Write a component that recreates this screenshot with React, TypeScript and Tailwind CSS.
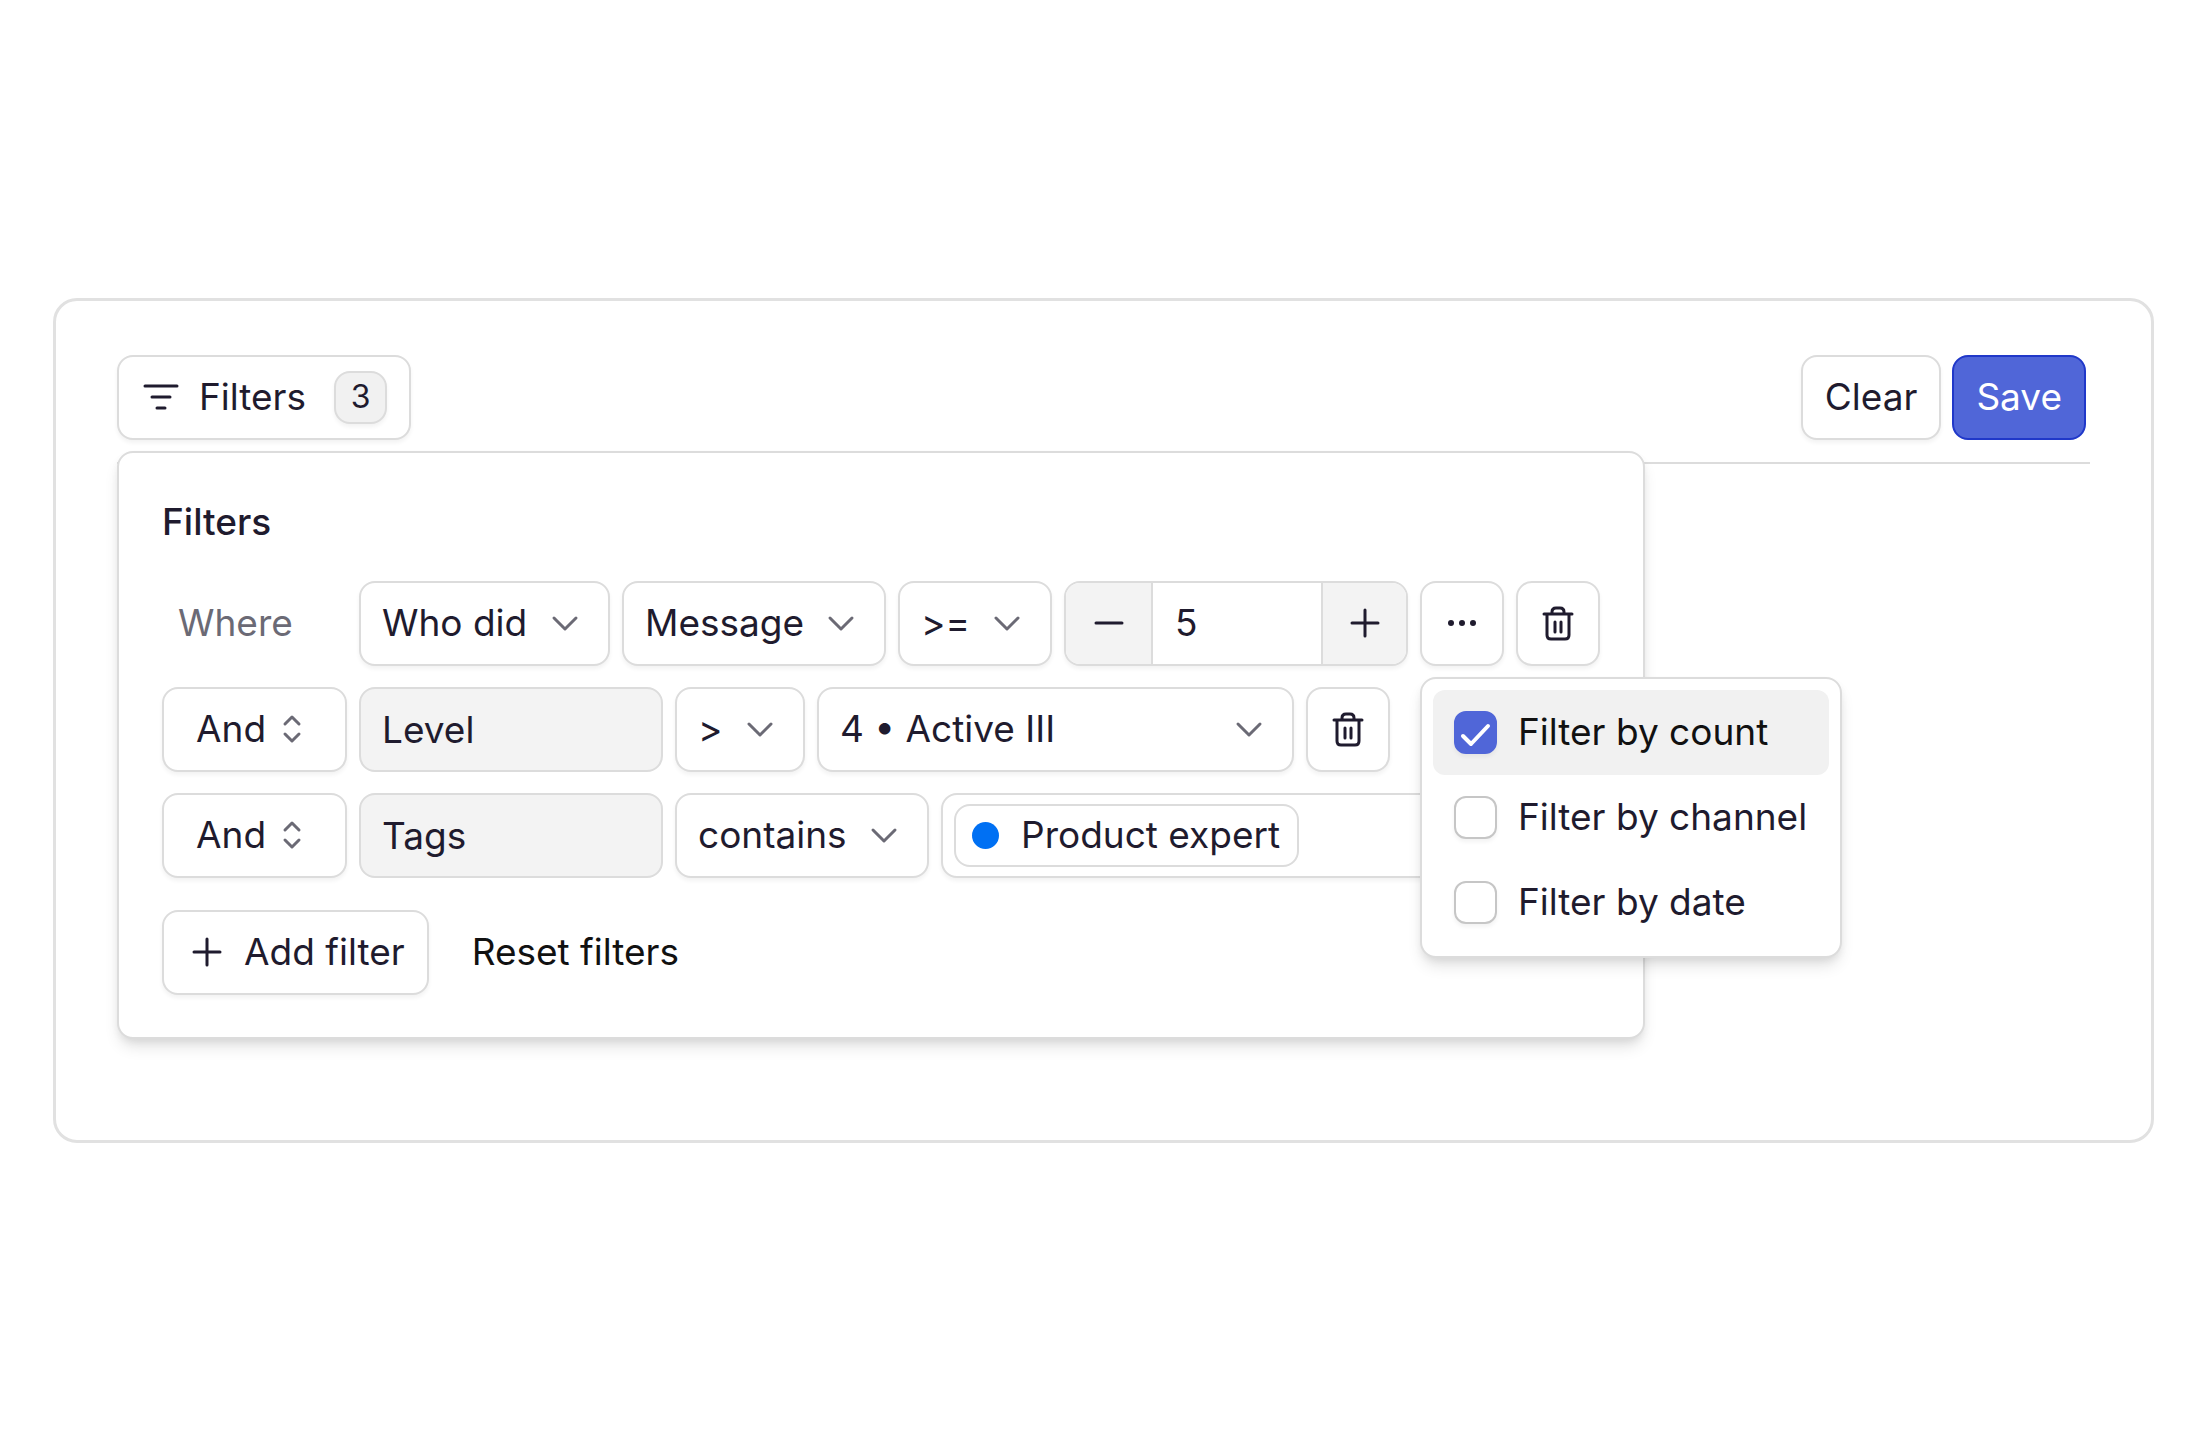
import React from "react";

const ink = "text-[#1f1b2e]";
const shell = "h-[85px] shrink-0 rounded-2xl border-2 border-[#dcdcdc] bg-white shadow-[0_3px_4px_rgba(0,0,0,0.05)]";
const filled = "h-[85px] shrink-0 rounded-2xl border-2 border-[#dcdcdc] bg-[#f3f3f3]";

function Stroke({ d, className, w, h, weight = 3 }: { d: string; className?: string; w: number; h: number; weight?: number }) {
  return (
    <svg width={w} height={h} viewBox={`0 0 ${w} ${h}`} fill="none" stroke="currentColor" strokeWidth={weight} strokeLinecap="round" strokeLinejoin="round" className={className} aria-hidden="true">
      <path d={d} />
    </svg>
  );
}

const chevron = "M3 3 14 14 25 3";
const plus = "M3 16H29M16 3V29";

function Trash() {
  return (
    <Stroke w={34} h={38} d="M3 10H31M6 10V31Q6 35 10 35H24Q28 35 28 31V10M11 10V8Q11 4 15 4H19Q23 4 23 8V10M14 18V28M20 18V28" />
  );
}

function Dropdown({ label, value, className }: { label: string; value: string; className: string }) {
  return (
    <div className={`relative shrink-0 ${className}`}>
      <select aria-label={label} className={`${shell} w-full appearance-none pl-[21px] pr-16`}>
        <option>{value}</option>
      </select>
      <Stroke w={28} h={17} d={chevron} className="pointer-events-none absolute right-[31px] top-[34px] text-[#6b6a75]" />
    </div>
  );
}

function Conjunction({ label }: { label: string }) {
  return (
    <div className="relative w-[185px] shrink-0">
      <select aria-label={label} className={`${shell} w-full appearance-none pl-8 pr-16`}>
        <option>And</option>
        <option>Or</option>
      </select>
      <Stroke w={20} h={30} d="M3 10 10 3 17 10M3 20 10 27 17 20" className="pointer-events-none absolute right-[45px] top-[27px] text-[#6b6a75]" />
    </div>
  );
}

function DeleteButton() {
  return (
    <button aria-label="Delete filter" className={`${shell} flex w-[84px] items-center justify-center`}>
      <Trash />
    </button>
  );
}

function MenuOption({ label, checked }: { label: string; checked?: boolean }) {
  return (
    <label className={checked ? "flex h-[85px] items-center gap-[21px] rounded-xl bg-[#f1f1f1] px-[21px] text-[#111111]" : "flex h-[85px] items-center gap-[21px] rounded-xl px-[21px]"}>
      <span className="relative flex size-[43px] shrink-0">
        <input type="checkbox" defaultChecked={checked} className="peer size-full appearance-none rounded-xl border-2 border-[#c6c6c6] bg-white shadow-[0_3px_4px_rgba(0,0,0,0.05)] checked:border-[#5066d8] checked:bg-[#5066d8]" />
        <Stroke w={43} h={43} weight={4} d="M9 25 17 33 34 15" className="pointer-events-none absolute inset-0 hidden text-white peer-checked:block" />
      </span>
      <span className="whitespace-nowrap">{label}</span>
    </label>
  );
}

function FilterMenu() {
  return (
    <div className="absolute left-0 top-[96px] z-10 flex w-[422px] flex-col rounded-2xl border-2 border-[#dcdcdc] bg-white p-[11px] shadow-[0_10px_16px_-3px_rgba(0,0,0,0.12),0_4px_8px_-2px_rgba(0,0,0,0.08)]">
      <MenuOption label="Filter by count" checked />
      <MenuOption label="Filter by channel" />
      <MenuOption label="Filter by date" />
    </div>
  );
}

export default function App() {
  return (
    <main className={`flex min-h-screen items-center bg-white px-[53px] font-['Inter',sans-serif] text-[37px] leading-[52px] ${ink}`}>
      <section className="w-full rounded-3xl border-[3px] border-[#e1e1e1] px-[61px] pb-[101px] pt-[54px]">
        <div className="relative flex h-[109px] items-start justify-between border-b-2 border-[#dcdcdc] pr-1">
          <button className={`${shell} flex items-center px-[22px]`}>
            <Stroke w={38} h={28} d="M4 3H36M11 14H29M16 25H24" />
            <span className="ml-5">Filters</span>
            <span className="ml-7 flex size-[53px] items-center justify-center rounded-2xl border-2 border-[#dcdcdc] bg-[#f1f1f1] text-[32px] shadow-[0_3px_4px_rgba(0,0,0,0.05)]">3</span>
          </button>
          <div className="flex gap-[11px]">
            <button className={`${shell} px-[22px]`}>Clear</button>
            <button className="h-[85px] rounded-2xl border-2 border-[#2038c9] bg-[#5066d8] px-[22px] text-white">Save</button>
          </div>
        </div>

        <div className="relative -mt-[13px] w-[1528px] rounded-2xl border-2 border-[#dcdcdc] bg-white px-[43px] pb-[42px] pt-[43px] shadow-[0_10px_16px_-3px_rgba(0,0,0,0.12),0_4px_8px_-2px_rgba(0,0,0,0.08)]">
          <h2 className="font-medium">Filters</h2>
          <div className="mt-[33px] flex flex-col gap-[21px]">
            <div className="flex gap-3">
              <span className="flex w-[185px] items-center pl-4 text-[#6b6a75]">Where</span>
              <Dropdown label="Event type" value="Who did" className="w-[251px]" />
              <Dropdown label="Event" value="Message" className="w-[264px]" />
              <Dropdown label="Comparison" value=">=" className="w-[154px]" />
              <div className={`${shell} flex w-[344px] overflow-hidden`}>
                <button aria-label="Decrease" className="flex w-[87px] items-center justify-center border-r-2 border-[#dcdcdc] bg-[#f3f3f3]">
                  <Stroke w={32} h={32} d="M3 16H29" />
                </button>
                <input aria-label="Count" defaultValue="5" className="min-w-0 flex-1 px-[22px]" />
                <button aria-label="Increase" className="flex w-[85px] items-center justify-center border-l-2 border-[#dcdcdc] bg-[#f3f3f3]">
                  <Stroke w={32} h={32} d={plus} />
                </button>
              </div>
              <div className="relative">
                <button aria-label="More options" className={`${shell} flex w-[84px] items-center justify-center`}>
                  <svg width="30" height="8" viewBox="0 0 30 8" fill="currentColor" aria-hidden="true">
                    <circle cx="4" cy="4" r="3" />
                    <circle cx="15" cy="4" r="3" />
                    <circle cx="26" cy="4" r="3" />
                  </svg>
                </button>
                <FilterMenu />
              </div>
              <DeleteButton />
            </div>
            <div className="flex gap-3">
              <Conjunction label="Second filter conjunction" />
              <input readOnly aria-label="Second filter field" value="Level" className={`${filled} w-[304px] px-[21px]`} />
              <Dropdown label="Level comparison" value=">" className="w-[130px]" />
              <Dropdown label="Level value" value="4 • Active III" className="w-[477px]" />
              <DeleteButton />
            </div>
            <div className="flex gap-3">
              <Conjunction label="Third filter conjunction" />
              <input readOnly aria-label="Third filter field" value="Tags" className={`${filled} w-[304px] px-[21px]`} />
              <Dropdown label="Tags comparison" value="contains" className="w-[254px]" />
              <div className={`${shell} flex flex-1 items-center px-[11px]`}>
                <span className="flex h-[63px] items-center gap-[22px] whitespace-nowrap rounded-2xl border-2 border-[#dcdcdc] pl-4 pr-[17px]">
                  <span className="size-[27px] rounded-full bg-[#0070f3]" />
                  Product expert
                </span>
                <input aria-label="Tags" className="ml-3 w-full min-w-0 flex-1" />
              </div>
            </div>
          </div>
          <div className="mt-8 flex items-center">
            <button className={`${shell} flex items-center gap-[21px] pl-[27px] pr-[22px]`}>
              <Stroke w={32} h={32} d={plus} />
              Add filter
            </button>
            <button className="ml-[43px] text-[#111111]">Reset filters</button>
          </div>
        </div>
      </section>
    </main>
  );
}
